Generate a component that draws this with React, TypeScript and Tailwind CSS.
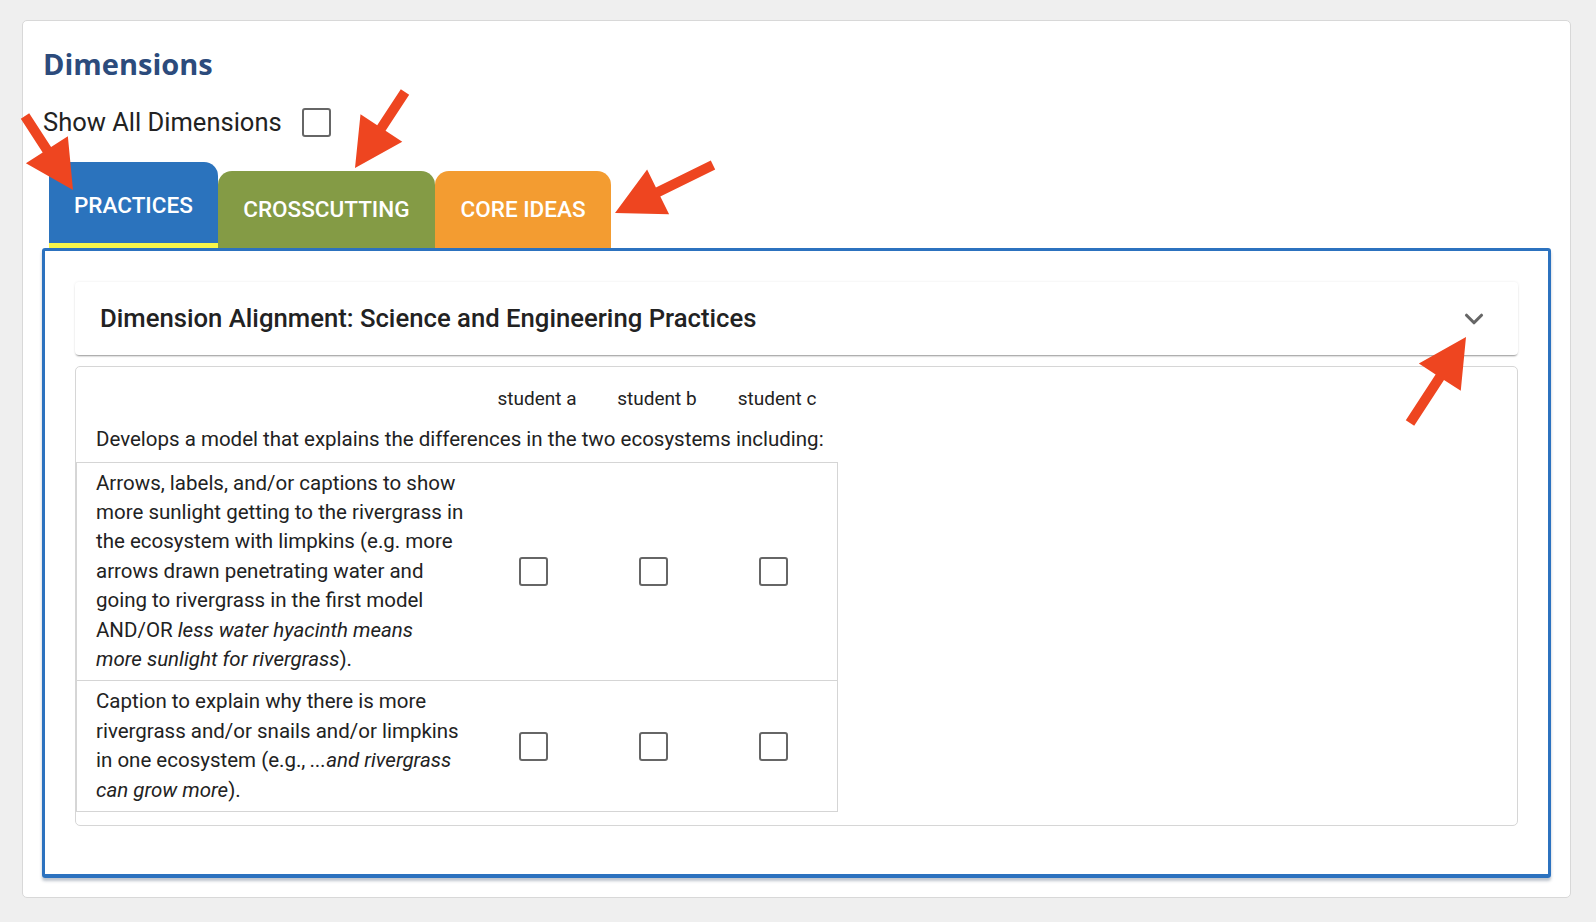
import { ChevronDown } from "lucide-react";

type Pt = { x: number; y: number };

const arrows: { tail: Pt; tip: Pt }[] = [
  { tail: { x: 25, y: 116 }, tip: { x: 73, y: 190 } },
  { tail: { x: 405, y: 92 }, tip: { x: 355, y: 168 } },
  { tail: { x: 713, y: 165 }, tip: { x: 615, y: 213 } },
  { tail: { x: 1410, y: 423 }, tip: { x: 1466, y: 337 } },
];

const arrowPoints = (tail: Pt, tip: Pt, shaft = 10, headLen = 48, headW = 50) => {
  const dx = tip.x - tail.x;
  const dy = tip.y - tail.y;
  const len = Math.hypot(dx, dy);
  const ux = dx / len;
  const uy = dy / len;
  const nx = -uy;
  const ny = ux;
  const bx = tip.x - ux * headLen;
  const by = tip.y - uy * headLen;
  const pts = [
    [tail.x + (nx * shaft) / 2, tail.y + (ny * shaft) / 2],
    [bx + (nx * shaft) / 2, by + (ny * shaft) / 2],
    [bx + (nx * headW) / 2, by + (ny * headW) / 2],
    [tip.x, tip.y],
    [bx - (nx * headW) / 2, by - (ny * headW) / 2],
    [bx - (nx * shaft) / 2, by - (ny * shaft) / 2],
    [tail.x - (nx * shaft) / 2, tail.y - (ny * shaft) / 2],
  ];
  return pts.map((p) => p.join(",")).join(" ");
};

const Box = ({ className = "" }: { className?: string }) => (
  <span
    className={`inline-block w-[29px] h-[29px] border-[2.5px] border-[#666] rounded-[3px] bg-white ${className}`}
  />
);

const rows = [
  (
    <>
      Arrows, labels, and/or captions to show more sunlight getting to the
      rivergrass in the ecosystem with limpkins (e.g. more arrows drawn
      penetrating water and going to rivergrass in the first model AND/OR{" "}
      <em>
        less water hyacinth means
        <br />
        more sunlight for rivergrass
      </em>
      ).
    </>
  ),
  (
    <>
      Caption to explain why there is more rivergrass and/or snails and/or
      limpkins in one ecosystem (e.g., <em>...and rivergrass can grow more</em>
      ).
    </>
  ),
];

export default function App() {
  return (
    <div
      className="relative min-h-screen bg-[#efefef] pt-[20px] pl-[22px] pr-[25px] pb-[26px] text-[#222]"
      style={{ fontFamily: "Roboto, 'Noto Sans', sans-serif" }}
    >
      <div className="bg-white border border-[#d8d8d8] rounded-[5px] px-[19px] pt-[26px] pb-[19px]">
        <h1
          className="pl-px text-[29px] leading-[34px] font-bold text-[#2c4b7c]"
          style={{ fontFamily: "'Open Sans', sans-serif" }}
        >
          Dimensions
        </h1>

        <div className="mt-[24px] pl-px flex items-center h-[34px] gap-[20px]">
          <span className="text-[25.5px] text-[#222]">Show All Dimensions</span>
          <Box />
        </div>

        <div className="mt-[23px] ml-[7px] flex items-end">
          <div className="flex flex-col">
            <div className="h-[81px] bg-[#2b73bd] rounded-tl-[8px] rounded-tr-[14px] px-[25px] pt-[6px] flex items-center text-white text-[22.5px] font-medium">
              PRACTICES
            </div>
            <div className="h-[5px] bg-[#f8f649]" />
          </div>
          <div className="h-[77px] bg-[#849b45] rounded-t-[14px] px-[25.5px] flex items-center text-white text-[22.5px] font-medium">
            CROSSCUTTING
          </div>
          <div className="h-[77px] bg-[#f39c31] rounded-t-[14px] px-[25.5px] flex items-center text-white text-[22.5px] font-medium">
            CORE IDEAS
          </div>
        </div>

        <div className="border-[3px] border-b-[4px] border-[#2c72bf] rounded-[3px] px-[30px] pt-[31px] pb-[48px] shadow-[0_3px_3px_rgba(40,60,90,0.3)]">
          <div className="h-[73px] rounded-[4px] bg-white shadow-[0_2px_2px_-1px_rgba(0,0,0,0.4),0_0_3px_rgba(0,0,0,0.08)] flex items-center justify-between pl-[25px] pr-[29px]">
            <h2 className="text-[25.7px] font-medium text-[#222]">
              Dimension Alignment: Science and Engineering Practices
            </h2>
            <ChevronDown size={30} strokeWidth={2.5} color="#666" />
          </div>

          <div className="mt-[11px] border border-[#d6d6d6] rounded-[5px] pt-[20px] pb-[13px]">
            <div className="grid grid-cols-[401px_120px_120px_120px] text-[19px] leading-[24px]">
              <div />
              <div className="text-center">student a</div>
              <div className="text-center">student b</div>
              <div className="text-center">student c</div>
            </div>
            <div className="mt-[14px] pl-[20px] text-[20.5px] leading-[29.5px]">
              Develops a model that explains the differences in the two
              ecosystems including:
            </div>
            <div className="mt-[7px] w-[762px] border border-[#d5d5d5]">
              {rows.map((content, i) => (
                <div
                  key={i}
                  className={`grid grid-cols-[400px_120px_120px_120px] items-center py-[6px] ${
                    i > 0 ? "border-t border-[#d5d5d5]" : ""
                  }`}
                >
                  <div className="pl-[19px] w-[392px] text-[20.5px] leading-[29.4px]">
                    {content}
                  </div>
                  <div className="flex justify-center pr-[8px]">
                    <Box />
                  </div>
                  <div className="flex justify-center pr-[8px]">
                    <Box />
                  </div>
                  <div className="flex justify-center pr-[8px]">
                    <Box />
                  </div>
                </div>
              ))}
            </div>
          </div>
        </div>
      </div>

      <svg
        className="absolute left-0 top-0 pointer-events-none"
        width={1596}
        height={922}
      >
        {arrows.map((a, i) => (
          <polygon key={i} points={arrowPoints(a.tail, a.tip)} fill="#ee4520" />
        ))}
      </svg>
    </div>
  );
}
